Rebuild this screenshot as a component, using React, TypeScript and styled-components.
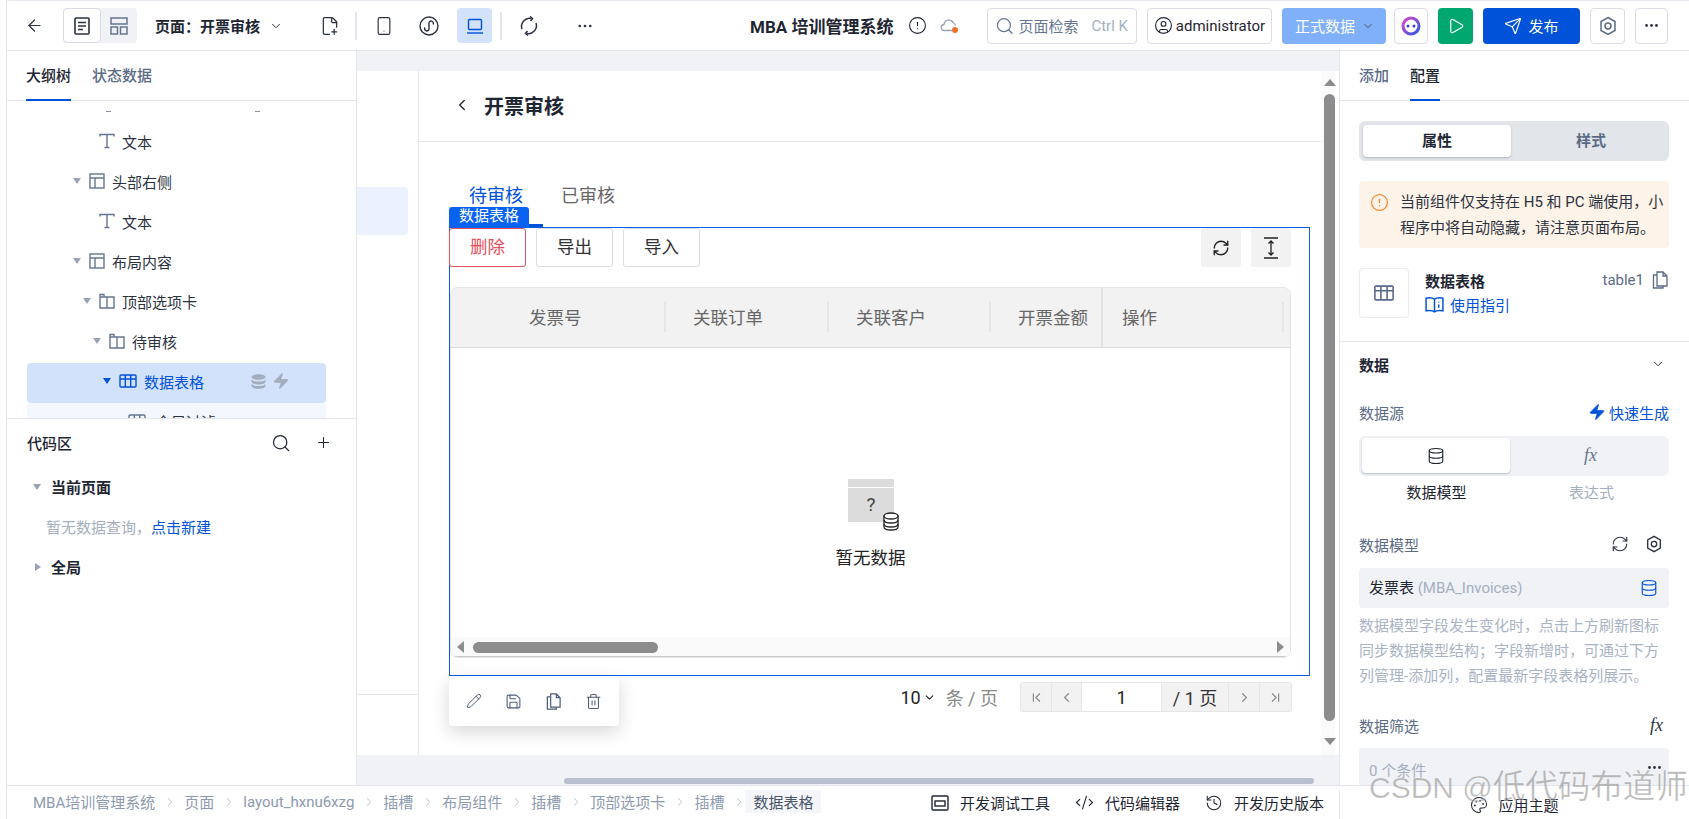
import styled, { createGlobalStyle } from "styled-components";
import {
  ArrowLeft,
  ChevronDown,
  ChevronFirst,
  ChevronLast,
  ChevronLeft,
  ChevronRight,
  CircleAlert,
  CircleUser,
  Code2,
  Database,
  FilePlus2,
  History,
  MoreHorizontal,
  Palette,
  Pencil,
  Play,
  Plus,
  RefreshCw,
  Save,
  Search,
  Send,
  Smartphone,
  Trash2,
  Zap,
} from "lucide-react";

const GlobalStyle = createGlobalStyle`
  html, body {
    margin: 0;
    padding: 0;
    height: 100%;
    overflow: hidden;
    background: #ffffff;
  }
  * { box-sizing: border-box; }
  #root {
    height: 819px;
    font-family: Roboto, "Noto Sans CJK SC", sans-serif;
    font-size: 15px;
    color: #1f2633;
  }
`;

const Shell = styled.div`
  position: relative;
  display: flex;
  flex-direction: column;
  width: 1689px;
  height: 819px;
  padding-left: 6px;
  overflow: hidden;
  background: #ffffff;
`;
const ShellInner = styled.div`
  display: flex;
  flex-direction: column;
  height: 100%;
  border-left: 1px solid #e2e5ee;
  border-top: 1px solid #e8eaf1;
`;

/* ---------- header ---------- */
const Header = styled.header`
  display: flex;
  align-items: center;
  flex: none;
  height: 50px;
  padding: 0 21px 0 18px;
  border-bottom: 1px solid #e2e5ee;
`;
const HeaderIcon = styled.button<{ $ml?: number; $active?: boolean }>`
  display: flex;
  align-items: center;
  justify-content: center;
  flex: none;
  width: 35px;
  height: 35px;
  margin-left: ${(p) => p.$ml ?? 0}px;
  padding: 0;
  border: none;
  border-radius: 4px;
  color: ${(p) => (p.$active ? "#0052d9" : "#2b3240")};
  background: ${(p) => (p.$active ? "#d2e2fb" : "transparent")};
`;
const BackIcon = styled.div`
  display: flex;
  color: #2b3240;
`;
const Segmented = styled.div`
  display: flex;
  flex: none;
  width: 74px;
  height: 35px;
  margin-left: 19px;
  border-radius: 4px;
  background: #f0f2f6;
`;
const SegmentItem = styled.div<{ $on?: boolean }>`
  display: flex;
  align-items: center;
  justify-content: center;
  flex: 1;
  border-radius: 4px;
  color: ${(p) => (p.$on ? "#2b3240" : "#66758f")};
  background: ${(p) => (p.$on ? "#ffffff" : "transparent")};
  border: ${(p) => (p.$on ? "1px solid #d6dae5" : "none")};
`;
const PageSelect = styled.div`
  display: flex;
  align-items: center;
  flex: none;
  margin-left: 18px;
  gap: 9px;
  font-weight: 700;
  white-space: nowrap;
`;
const HeaderSep = styled.div<{ $ml: number }>`
  flex: none;
  width: 2px;
  height: 28px;
  margin-left: ${(p) => p.$ml}px;
  background: #e2e5ee;
`;
const AppTitle = styled.div`
  flex: none;
  margin-left: 148px;
  font-size: 17px;
  font-weight: 700;
  white-space: nowrap;
`;
const TitleIcon = styled.div<{ $ml: number }>`
  display: flex;
  margin-left: ${(p) => p.$ml}px;
`;
const RightGroup = styled.div`
  display: flex;
  align-items: center;
  margin-left: auto;
`;
const SearchBox = styled.div`
  display: flex;
  align-items: center;
  width: 150px;
  height: 36px;
  padding: 0 8px 0 7px;
  gap: 4px;
  border: 1px solid #d9dde7;
  border-radius: 4px;
  color: #66758f;
  white-space: nowrap;
`;
const ShortcutHint = styled.span`
  margin-left: 9px;
  color: #a5afc0;
`;
const UserBox = styled.div`
  display: flex;
  align-items: center;
  justify-content: center;
  width: 125px;
  height: 36px;
  margin-left: 10px;
  gap: 3px;
  border: 1px solid #d9dde7;
  border-radius: 4px;
  white-space: nowrap;
`;
const EnvButton = styled.div`
  display: flex;
  align-items: center;
  width: 104px;
  height: 36px;
  margin-left: 10px;
  padding-left: 13px;
  gap: 6px;
  border-radius: 4px;
  color: #ffffff;
  background: #80b0fa;
  white-space: nowrap;
  svg { color: #5f7ea8; }
`;
const SquareButton = styled.div<{ $w?: number; $ml?: number; $bg?: string; $muted?: boolean }>`
  display: flex;
  align-items: center;
  justify-content: center;
  width: ${(p) => p.$w ?? 35}px;
  height: 36px;
  margin-left: ${(p) => p.$ml ?? 10}px;
  border-radius: 4px;
  border: ${(p) => (p.$bg ? "none" : "1px solid #d9dde7")};
  background: ${(p) => p.$bg ?? "#ffffff"};
  color: ${(p) => (p.$bg ? "#ffffff" : p.$muted ? "#5b6b86" : "#2b3240")};
`;
const PublishButton = styled(SquareButton)`
  width: 97px;
  gap: 6px;
`;

/* ---------- main columns ---------- */
const Main = styled.div`
  display: flex;
  flex: none;
  height: 734px;
`;
const LeftPanel = styled.aside`
  display: flex;
  flex-direction: column;
  flex: none;
  width: 350px;
  border-right: 1px solid #e2e5ee;
`;
const PanelTabs = styled.div`
  display: flex;
  flex: none;
  height: 50px;
  padding-left: 19px;
  gap: 21px;
  border-bottom: 1px solid #e2e5ee;
`;
const PanelTab = styled.div<{ $on?: boolean }>`
  display: flex;
  align-items: center;
  height: 50px;
  padding-bottom: 2px;
  font-weight: 500;
  color: ${(p) => (p.$on ? "#1f2633" : "#5b6b86")};
  border-bottom: 2px solid ${(p) => (p.$on ? "#0052d9" : "transparent")};
`;
const Tree = styled.div`
  flex: none;
  height: 317px;
  overflow: hidden;
  padding: 10px 30px 0 20px;
`;
const TreePeek = styled.div`
  display: flex;
  height: 12px;
  padding-left: 79px;
  gap: 144px;
  i {
    width: 5px;
    height: 1px;
    background: #8a93a5;
  }
`;
const TreeRow = styled.div<{ $pad: number; $selected?: boolean; $child?: boolean }>`
  display: flex;
  align-items: center;
  height: 40px;
  padding-left: ${(p) => p.$pad}px;
  padding-bottom: 4px;
  border-radius: 4px;
  white-space: nowrap;
  color: ${(p) => (p.$selected ? "#0052d9" : "#2b3240")};
  background: ${(p) => (p.$selected ? "#d2e2fb" : p.$child ? "#f4f7fe" : "transparent")};
`;
const Caret = styled.span<{ $dir?: "down" | "right"; $color?: string }>`
  flex: none;
  width: 0;
  height: 0;
  ${(p) =>
    p.$dir === "right"
      ? `border-left: 6px solid ${p.$color ?? "#98a2b6"}; border-top: 4px solid transparent; border-bottom: 4px solid transparent; margin-left: 2px;`
      : `border-top: 6px solid ${p.$color ?? "#98a2b6"}; border-left: 4px solid transparent; border-right: 4px solid transparent;`}
`;
const TreeIcon = styled.span<{ $ml?: number; $gap?: number }>`
  display: flex;
  flex: none;
  margin: 0 ${(p) => p.$gap ?? 7}px 0 ${(p) => p.$ml ?? 8}px;
  color: ${(p) => p.color ?? "#66758f"};
`;
const RowActions = styled.span`
  display: flex;
  align-items: center;
  margin-left: 47px;
  gap: 6px;
  color: #a2adbd;
`;
const CodeArea = styled.div`
  flex: 1;
  border-top: 1px solid #e2e5ee;
  padding: 0 24px 0 20px;
`;
const CodeHead = styled.div`
  display: flex;
  align-items: center;
  height: 48px;
  padding-bottom: 3px;
  margin-top: 1px;
  font-weight: 500;
`;
const CodeTools = styled.div`
  display: flex;
  align-items: center;
  margin-left: auto;
  gap: 24px;
  svg { display: block; }
`;
const CodeGroup = styled.div`
  display: flex;
  align-items: center;
  height: 40px;
  padding-left: 6px;
  padding-bottom: 3px;
  gap: 10px;
  font-weight: 700;
  &:first-of-type { margin-top: 1px; }
`;
const CodeEmpty = styled.div`
  display: flex;
  align-items: center;
  height: 40px;
  padding-left: 19px;
  padding-bottom: 3px;
  color: #a5afc0;
  a { color: #0052d9; }
`;

/* ---------- canvas ---------- */
const Canvas = styled.main`
  display: flex;
  flex-direction: column;
  flex: 1;
  min-width: 0;
  padding-top: 20px;
  background: #f0f2f6;
`;
const Page = styled.div`
  display: flex;
  flex: none;
  height: 684px;
  padding-right: 4px;
  background: #ffffff;
`;
const PageSide = styled.div`
  flex: none;
  display: flex;
  flex-direction: column;
  width: 62px;
  padding-top: 116px;
  border-right: 1px solid #e5e7eb;
`;
const SideActive = styled.div`
  width: 51px;
  height: 48px;
  border-radius: 0 4px 4px 0;
  background: #ebf1fd;
`;
const SideLine = styled.div`
  margin-top: 459px;
  height: 1px;
  background: #e5e7eb;
`;
const PageMain = styled.div`
  flex: 1;
  min-width: 0;
`;
const PageHeader = styled.div`
  display: flex;
  align-items: center;
  height: 71px;
  padding: 0 0 2px 34px;
  gap: 13px;
  border-bottom: 1px solid #e5e7eb;
  font-size: 20px;
  font-weight: 700;
`;
const PageBody = styled.div`
  padding: 38px 11px 0 30px;
`;
const ContentTabs = styled.div`
  display: flex;
  height: 47px;
`;
const ContentTab = styled.div<{ $on?: boolean }>`
  height: 47px;
  padding: 0 20px;
  font-size: 18px;
  line-height: 32px;
  color: ${(p) => (p.$on ? "#0052d9" : "#666666")};
  border-bottom: 3px solid ${(p) => (p.$on ? "#0052d9" : "transparent")};
  & + & { margin-left: -2px; }
`;
const SelectFrame = styled.div`
  position: relative;
  height: 449px;
  padding: 0 18px 0 0;
  border: 1px solid #0b5fe0;
`;
const FrameTag = styled.div`
  position: absolute;
  top: -21px;
  left: -1px;
  width: 80px;
  height: 21px;
  border-radius: 3px 3px 0 0;
  color: #ffffff;
  background: #0a62f0;
  font-size: 15px;
  line-height: 19px;
  text-align: center;
`;
const TableToolbar = styled.div`
  display: flex;
  gap: 10px;
  height: 39px;
  margin-left: -1px;
`;
const ToolButton = styled.div<{ $danger?: boolean }>`
  display: flex;
  align-items: center;
  justify-content: center;
  width: 77px;
  height: 39px;
  padding-bottom: 4px;
  border-radius: 3px;
  border: 1px solid ${(p) => (p.$danger ? "#e4505c" : "#dddddd")};
  color: ${(p) => (p.$danger ? "#e4505c" : "#333333")};
  font-size: 17.500px;
`;
const ToolSquare = styled.div<{ $first?: boolean }>`
  display: flex;
  align-items: center;
  justify-content: center;
  width: 40px;
  height: 39px;
  margin-left: ${(p) => (p.$first ? "auto" : "0")};
  border-radius: 3px;
  background: #f2f2f2;
  color: #222222;
`;
const Table = styled.div`
  display: flex;
  flex-direction: column;
  height: 371px;
  margin-top: 20px;
  border: 1px solid #e3e3e3;
  border-radius: 8px;
  overflow: hidden;
`;
const TableHead = styled.div`
  display: flex;
  flex: none;
  height: 60px;
  background: #f2f2f2;
  border-bottom: 1px solid #dcdcdc;
  color: #666666;
  font-size: 17.500px;
`;
const HeadCell = styled.div<{ $w: number; $pad: number; $fixed?: boolean }>`
  display: flex;
  align-items: center;
  flex: none;
  width: ${(p) => p.$w}px;
  padding-left: ${(p) => p.$pad}px;
  padding-bottom: 2px;
  border-left: ${(p) => (p.$fixed ? "2px solid #e3e3e3" : "none")};
  white-space: nowrap;
`;
const HeadSep = styled.span`
  width: 2px;
  height: 30px;
  margin-left: auto;
  background: #e6e6e6;
`;
const TableEmpty = styled.div`
  display: flex;
  flex-direction: column;
  align-items: center;
  flex: 1;
  padding-top: 131px;
  font-size: 17.500px;
  line-height: 26px;
  color: #222222;
  svg { display: block; margin: 0 0 14px 6px; }
`;
const HScroll = styled.div`
  display: flex;
  align-items: center;
  flex: none;
  height: 20px;
  padding: 1px 6px 0;
  background: #fafafa;
  border-bottom: 1px solid #c9c9c9;
`;
const HThumb = styled.div`
  width: 185px;
  height: 11px;
  margin-left: 9px;
  border-radius: 6px;
  background: #8c8c8c;
`;
const ScrollArrow = styled.span<{ $dir: "left" | "right" | "up" | "down"; $auto?: boolean }>`
  flex: none;
  width: 0;
  height: 0;
  margin-left: ${(p) => (p.$auto ? "auto" : "0")};
  ${(p) =>
    p.$dir === "left"
      ? "border-right: 7px solid #8c8c8c; border-top: 6px solid transparent; border-bottom: 6px solid transparent;"
      : p.$dir === "right"
        ? "border-left: 7px solid #8c8c8c; border-top: 6px solid transparent; border-bottom: 6px solid transparent;"
        : p.$dir === "up"
          ? "border-bottom: 7px solid #8c8c8c; border-left: 6px solid transparent; border-right: 6px solid transparent;"
          : "border-top: 7px solid #8c8c8c; border-left: 6px solid transparent; border-right: 6px solid transparent; margin-left: 0; margin-top: 17px;"}
`;
const PagerZone = styled.div`
  position: relative;
  display: flex;
  align-items: center;
  justify-content: flex-end;
  height: 42px;
  padding: 6px 18px 6px 0;
`;
const PageSize = styled.div`
  display: flex;
  align-items: center;
  gap: 2px;
  font-size: 18px;
  color: #222222;
`;
const PerPage = styled.span`
  margin: 0 22px 0 10px;
  font-size: 18px;
  color: #888888;
`;
const Pager = styled.div`
  display: flex;
  height: 30px;
  border: 1px solid #e6e6e6;
  border-radius: 3px;
  background: #f2f2f2;
  overflow: hidden;
`;
const PagerCell = styled.div<{ $w: number; $input?: boolean }>`
  display: flex;
  align-items: center;
  justify-content: center;
  width: ${(p) => p.$w}px;
  font-size: 18px;
  color: ${(p) => (p.$input ? "#222222" : "#333333")};
  background: ${(p) => (p.$input ? "#ffffff" : "transparent")};
  border-right: 1px solid #e6e6e6;
  &:last-child { border-right: none; }
  svg { color: #8f8f8f; }
`;
const FloatBar = styled.div`
  position: absolute;
  top: 0;
  left: 0;
  display: flex;
  align-items: center;
  justify-content: center;
  width: 170px;
  height: 50px;
  gap: 23px;
  border-radius: 0 0 4px 4px;
  color: #4d5d7a;
  background: #ffffff;
  box-shadow: 0 6px 18px rgba(0, 0, 0, 0.16);
`;
const VScroll = styled.div`
  display: flex;
  flex-direction: column;
  align-items: center;
  flex: none;
  width: 14px;
  padding: 8px 0 8px 3px;
  background: #fafafa;
`;
const VThumb = styled.div`
  flex: none;
  width: 11px;
  height: 627px;
  margin-top: 8px;
  border-radius: 6px;
  background: #8c8c8c;
`;
const CanvasFoot = styled.div`
  display: flex;
  align-items: center;
  flex: 1;
  padding: 22px 25px 0 207px;
`;
const CanvasThumb = styled.div`
  width: 100%;
  height: 6px;
  border-radius: 3px;
  background: #b8c0cf;
`;

/* ---------- right panel ---------- */
const RightPanel = styled.aside`
  flex: none;
  width: 350px;
  border-left: 1px solid #e2e5ee;
  overflow: hidden;
`;
const RightBody = styled.div`
  padding: 0 20px 0 19px;
`;
const Switcher = styled.div<{ $tone: "dark" | "light" }>`
  display: flex;
  height: 40px;
  margin-top: ${(p) => (p.$tone === "dark" ? 20 : 12)}px;
  padding: ${(p) => (p.$tone === "dark" ? "4px 0 4px 4px" : "2px 0 3px 3px")};
  border-radius: 6px;
  background: ${(p) => (p.$tone === "dark" ? "#e2e5ea" : "#f0f2f6")};
`;
const SwitchItem = styled.div<{ $on?: boolean; $text?: boolean }>`
  display: flex;
  align-items: center;
  justify-content: center;
  flex: ${(p) => (p.$on ? "0 0 148px" : "1")};
  margin-right: ${(p) => (p.$on ? "2px" : "0")};
  padding-bottom: ${(p) => (p.$text ? "3px" : "0")};
  border-radius: 4px;
  font-weight: 700;
  color: ${(p) => (p.$on ? "#1f2633" : "#5b6b86")};
  background: ${(p) => (p.$on ? "#ffffff" : "transparent")};
  box-shadow: ${(p) => (p.$on ? "0 1px 2px rgba(60, 70, 90, 0.3)" : "none")};
`;
const Notice = styled.div`
  display: flex;
  gap: 11px;
  height: 67px;
  margin-top: 20px;
  padding: 8px 0 0 11px;
  border-radius: 4px;
  background: #fef3e9;
  line-height: 26px;
  color: #2b3240;
  white-space: nowrap;
  svg { flex: none; margin-top: 4px; color: #f58a32; }
`;
const CompCard = styled.div`
  display: flex;
  margin-top: 20px;
  height: 50px;
`;
const CompIcon = styled.div`
  display: flex;
  align-items: center;
  justify-content: center;
  flex: none;
  width: 50px;
  height: 50px;
  border: 1px solid #e8eaf0;
  border-radius: 4px;
  color: #5b6b86;
`;
const CompInfo = styled.div`
  flex: 1;
  padding-left: 16px;
`;
const CompLine = styled.div`
  display: flex;
  align-items: center;
  height: 24px;
  font-weight: 700;
`;
const CompName = styled.span`
  display: flex;
  align-items: center;
  margin-left: auto;
  gap: 7px;
  font-weight: 400;
  color: #5b6b86;
  svg { color: #5b6b86; }
`;
const GuideLink = styled.div`
  display: flex;
  align-items: center;
  height: 24px;
  gap: 6px;
  color: #0052d9;
`;
const Divider = styled.div`
  height: 1px;
  margin-top: 23px;
  background: #e2e5ee;
`;
const SectionHead = styled.div`
  display: flex;
  align-items: center;
  justify-content: space-between;
  height: 46px;
  padding: 0 4px 2px 0;
  font-weight: 700;
`;
const FieldRow = styled.div<{ $mt: number }>`
  display: flex;
  align-items: center;
  justify-content: space-between;
  height: 24px;
  margin-top: ${(p) => p.$mt}px;
  color: #5b6b86;
`;
const QuickLink = styled.span`
  display: flex;
  align-items: center;
  gap: 3px;
  color: #0052d9;
`;
const FieldIcons = styled.span`
  display: flex;
  align-items: center;
  gap: 16px;
  padding-right: 6px;
  color: #2b3240;
`;
const SwitchLabels = styled.div`
  display: flex;
  height: 24px;
  margin-top: 5px;
  line-height: 24px;
`;
const SwitchLabel = styled.div<{ $muted?: boolean }>`
  flex: 1;
  text-align: center;
  color: ${(p) => (p.$muted ? "#a5afc0" : "#1f2633")};
`;
const ModelInput = styled.div`
  display: flex;
  align-items: center;
  justify-content: space-between;
  height: 40px;
  margin-top: 12px;
  padding: 0 11px 0 10px;
  border-radius: 4px;
  background: #f0f2f6;
  color: #1f2633;
  div { margin-bottom: 4px; }
  span { color: #a5afc0; }
  svg { color: #0052d9; }
`;
const HelpText = styled.div`
  margin-top: 6px;
  line-height: 25px;
  color: #a9b3c4;
`;
const FilterBox = styled.div`
  display: flex;
  justify-content: space-between;
  height: 60px;
  margin-top: 11px;
  padding: 11px 6px 0 10px;
  border-radius: 4px;
  background: #f0f2f6;
  color: #a5afc0;
  svg { color: #2b3240; }
`;
const FxMark = styled.span<{ $muted?: boolean }>`
  font-family: "Liberation Serif", serif;
  font-style: italic;
  font-weight: 400;
  font-size: 18px;
  color: ${(p) => (p.$muted ? "#66758f" : "#2b3240")};
`;

/* ---------- footer ---------- */
const Footer = styled.footer`
  display: flex;
  align-items: center;
  flex: none;
  height: 34px;
  border-top: 1px solid #e2e5ee;
`;
const Crumbs = styled.nav`
  display: flex;
  align-items: center;
  padding: 0 0 2px 26px;
  color: #8d9ab0;
  white-space: nowrap;
`;
const CrumbSep = styled.span`
  display: flex;
  justify-content: center;
  width: 29px;
  color: #a5afc0;
`;
const CrumbLast = styled.span`
  margin-left: -8px;
  padding: 1px 8px;
  color: #4a5568;
  background: #f4f6fa;
`;
const FootTools = styled.div`
  display: flex;
  align-items: center;
  margin-left: auto;
  padding-right: 15px;
  gap: 25px;
`;
const FootTool = styled.div`
  display: flex;
  align-items: center;
  gap: 11px;
  white-space: nowrap;
`;
const ThemeCell = styled.div`
  display: flex;
  align-items: center;
  justify-content: center;
  flex: none;
  width: 350px;
  height: 29px;
  margin-top: 4px;
  gap: 10px;
  border-left: 1px solid #e2e5ee;
`;
const Watermark = styled.div`
  position: absolute;
  top: 765px;
  left: 1369px;
  font-family: "Liberation Sans", "Noto Sans CJK SC", sans-serif;
  font-size: 30px;
  line-height: 44px;
  white-space: nowrap;
  color: rgba(140, 140, 140, 0.6);
  -webkit-text-stroke: 0.6px rgba(255, 255, 255, 0.5);
  pointer-events: none;
  span { font-size: 32.500px; }
`;

/* ---------- drawn icons ---------- */
const DocListIcon = () => (
  <svg width="18" height="20" viewBox="0 0 18 20" fill="none" stroke="currentColor" strokeWidth="1.6">
    <rect x="2" y="2" width="14" height="16" rx="1" />
    <path d="M5 6.500h8M5 10h8M5 13.500h5" />
  </svg>
);
const LayoutIcon = () => (
  <svg width="20" height="20" viewBox="0 0 20 20" fill="none" stroke="currentColor" strokeWidth="1.5">
    <rect x="2" y="2" width="16" height="6" />
    <rect x="2" y="11" width="6.500" height="7" />
    <rect x="11.500" y="11" width="6.500" height="7" />
  </svg>
);
const MiniAppIcon = () => (
  <svg width="20" height="20" viewBox="0 0 20 20" fill="none" stroke="currentColor" strokeWidth="1.4">
    <circle cx="10" cy="10" r="9" />
    <path d="M6 11.500a2.200 2.200 0 1 0 4 1V7.500a2.200 2.200 0 1 1 4 1" />
  </svg>
);
const LaptopIcon = () => (
  <svg width="18" height="18" viewBox="0 0 18 18" fill="none" stroke="currentColor" strokeWidth="1.4">
    <rect x="2.500" y="2.500" width="13" height="10" rx="1" />
    <path d="M1 16h16" />
  </svg>
);
const SyncIcon = () => (
  <svg width="20" height="20" viewBox="0 0 20 20" fill="none" stroke="currentColor" strokeWidth="1.5">
    <path d="M3 13a8 8 0 0 1 9-10.500M17 7a8 8 0 0 1-9 10.500" />
    <path d="M11 0.500l2.500 2-2 2.500M9 19.500l-2.500-2 2-2.500" />
  </svg>
);
const AiIcon = () => (
  <svg width="20" height="20" viewBox="0 0 20 20">
    <defs>
      <linearGradient id="ai-ring" x1="0" y1="0" x2="1" y2="1">
        <stop offset="0" stopColor="#e040c8" />
        <stop offset="1" stopColor="#2a5be8" />
      </linearGradient>
    </defs>
    <circle cx="10" cy="10" r="8" fill="none" stroke="url(#ai-ring)" strokeWidth="3" />
    <circle cx="7" cy="10" r="1.500" fill="#3a3fd8" />
    <circle cx="13" cy="10" r="1.500" fill="#3a3fd8" />
  </svg>
);
const HexGearIcon = ({ size = 20 }: { size?: number }) => (
  <svg width={size} height={size} viewBox="0 0 20 20" fill="none" stroke="currentColor" strokeWidth="1.5">
    <path d="M10 1.500l7 4v9l-7 4-7-4v-9z" />
    <circle cx="10" cy="10" r="3" />
  </svg>
);
const TextIcon = () => (
  <svg width="16" height="16" viewBox="0 0 16 16" fill="none" stroke="currentColor" strokeWidth="1.4">
    <path d="M1 3.500V1.500h14v2M8 1.500v13M5.500 14.500h5" />
  </svg>
);
const PanelIcon = () => (
  <svg width="16" height="16" viewBox="0 0 16 16" fill="none" stroke="currentColor" strokeWidth="1.4">
    <rect x="1" y="1" width="14" height="14" />
    <path d="M1 5h14M6 5v10" />
  </svg>
);
const TabsIcon = () => (
  <svg width="16" height="16" viewBox="0 0 16 16" fill="none" stroke="currentColor" strokeWidth="1.4">
    <path d="M1 4h14v11H1zM1 4V1.500h4V4M8 4v11" />
  </svg>
);
const GridIcon = ({ w = 18, h = 14 }: { w?: number; h?: number }) => (
  <svg width={w} height={h} viewBox="0 0 18 14" fill="none" stroke="currentColor" strokeWidth="1.4">
    <rect x="1" y="1" width="16" height="12" rx="1" />
    <path d="M1 5h16M6.300 1v12M11.700 1v12" />
  </svg>
);
const StackIcon = () => (
  <svg width="15" height="15" viewBox="0 0 15 15" fill="currentColor">
    <ellipse cx="7.500" cy="3" rx="7" ry="2.800" />
    <path d="M0.500 5.400c1.200 1.500 3.800 2.200 7 2.200s5.800-.7 7-2.200v2.300c0 1.500-3 2.700-7 2.700s-7-1.200-7-2.700z" />
    <path d="M0.500 9.900c1.200 1.500 3.800 2.200 7 2.200s5.800-.7 7-2.200v2.200c0 1.500-3 2.700-7 2.700s-7-1.200-7-2.700z" />
  </svg>
);
const CopyDocIcon = ({ size = 18 }: { size?: number }) => (
  <svg width={size} height={size} viewBox="0 0 18 18" fill="none" stroke="currentColor" strokeWidth="1.3">
    <path d="M6 1h6l4 4v10H6zM12 1v4h4" />
    <path d="M6 4H2.500v13H12v-2" />
  </svg>
);
const EmptyIcon = () => (
  <svg width="52" height="52" viewBox="0 0 52 52">
    <rect x="0" y="0" width="46" height="8" fill="#dcdcdc" />
    <rect x="0" y="9" width="46" height="34" fill="#dcdcdc" />
    <text x="23" y="32" fontSize="19" textAnchor="middle" fill="#444444" fontFamily="Roboto, sans-serif">?</text>
    <g fill="#ffffff" stroke="#222222" strokeWidth="1.3">
      <path d="M36 37v11c0 2 3 3 7 3s7-1 7-3V37z" />
      <ellipse cx="43" cy="37" rx="7" ry="3" />
      <path d="M36 41c0 2 3 3 7 3s7-1 7-3M36 45c0 2 3 3 7 3s7-1 7-3" fill="none" />
    </g>
  </svg>
);
const DisplayIcon = () => (
  <svg width="18" height="18" viewBox="0 0 18 18" fill="none" stroke="currentColor" strokeWidth="1.4">
    <rect x="1" y="2" width="16" height="14" rx="1" />
    <rect x="4" y="7" width="10" height="5" />
  </svg>
);
const ExpandIcon = () => (
  <svg width="20" height="22" viewBox="0 0 20 22" fill="none" stroke="currentColor" strokeWidth="1.3">
    <path d="M3 1h14M3 21h14M10 4v14M7.500 6.500L10 4l2.500 2.500M7.500 15.500L10 18l2.500-2.500" />
  </svg>
);
const BookIcon = () => (
  <svg width="19" height="19" viewBox="0 0 18 18" fill="none" stroke="currentColor" strokeWidth="1.4">
    <path d="M9 4C7.500 2.800 4 2.500 1 3v12c3-.5 6.500-.2 8 1 1.500-1.200 5-1.500 8-1V3c-3-.5-6.500-.2-8 1zM9 4v12" />
    <path d="M13 6.500v.5M13 9v3" />
  </svg>
);

const crumbs = ["MBA培训管理系统", "页面", "layout_hxnu6xzg", "插槽", "布局组件", "插槽", "顶部选项卡", "插槽"];

export default function App() {
  return (
    <>
      <GlobalStyle />
      <Shell>
        <ShellInner>
          <Header>
            <BackIcon>
              <ArrowLeft size={19} strokeWidth={1.5} />
            </BackIcon>
            <Segmented>
              <SegmentItem $on>
                <DocListIcon />
              </SegmentItem>
              <SegmentItem>
                <LayoutIcon />
              </SegmentItem>
            </Segmented>
            <PageSelect>
              页面：开票审核
              <ChevronDown size={14} strokeWidth={1.6} />
            </PageSelect>
            <HeaderIcon $ml={29}>
              <FilePlus2 size={20} strokeWidth={1.5} />
            </HeaderIcon>
            <HeaderSep $ml={8} />
            <HeaderIcon $ml={9}>
              <Smartphone size={20} strokeWidth={1.4} />
            </HeaderIcon>
            <HeaderIcon $ml={10}>
              <MiniAppIcon />
            </HeaderIcon>
            <HeaderIcon $ml={11} $active>
              <LaptopIcon />
            </HeaderIcon>
            <HeaderSep $ml={8} />
            <HeaderIcon $ml={9}>
              <SyncIcon />
            </HeaderIcon>
            <HeaderIcon $ml={21}>
              <MoreHorizontal size={18} strokeWidth={1.6} />
            </HeaderIcon>
            <AppTitle>MBA 培训管理系统</AppTitle>
            <TitleIcon $ml={15}>
              <CircleAlert size={19} strokeWidth={1.4} />
            </TitleIcon>
            <TitleIcon $ml={13}>
              <svg width="20" height="20" viewBox="0 0 20 20" fill="none" stroke="#98a2b6" strokeWidth="1.3">
                <path d="M12 14.500H4.500a3 3 0 0 1-.5-6 5 5 0 0 1 9.500-1.500 3.500 3.500 0 0 1 2 2.500" />
                <circle cx="15" cy="14" r="3" fill="#f2702c" stroke="none" />
              </svg>
            </TitleIcon>
            <RightGroup>
              <SearchBox>
                <Search size={20} strokeWidth={1.5} />
                页面检索
                <ShortcutHint>Ctrl K</ShortcutHint>
              </SearchBox>
              <UserBox>
                <CircleUser size={19} strokeWidth={1.4} />
                administrator
              </UserBox>
              <EnvButton>
                正式数据
                <ChevronDown size={14} />
              </EnvButton>
              <SquareButton $w={34} $ml={8}>
                <AiIcon />
              </SquareButton>
              <SquareButton $bg="#00a870">
                <Play size={18} strokeWidth={1.6} />
              </SquareButton>
              <PublishButton $bg="#0052d9">
                <Send size={18} strokeWidth={1.5} />
                发布
              </PublishButton>
              <SquareButton $muted>
                <HexGearIcon size={20} />
              </SquareButton>
              <SquareButton $w={33}>
                <MoreHorizontal size={17} />
              </SquareButton>
            </RightGroup>
          </Header>

          <Main>
            <LeftPanel>
              <PanelTabs>
                <PanelTab $on>大纲树</PanelTab>
                <PanelTab>状态数据</PanelTab>
              </PanelTabs>
              <Tree>
                <TreePeek>
                  <i />
                  <i />
                </TreePeek>
                <TreeRow $pad={72}>
                  <TreeIcon $ml={0}>
                    <TextIcon />
                  </TreeIcon>
                  文本
                </TreeRow>
                <TreeRow $pad={46}>
                  <Caret />
                  <TreeIcon>
                    <PanelIcon />
                  </TreeIcon>
                  头部右侧
                </TreeRow>
                <TreeRow $pad={72}>
                  <TreeIcon $ml={0}>
                    <TextIcon />
                  </TreeIcon>
                  文本
                </TreeRow>
                <TreeRow $pad={46}>
                  <Caret />
                  <TreeIcon>
                    <PanelIcon />
                  </TreeIcon>
                  布局内容
                </TreeRow>
                <TreeRow $pad={56}>
                  <Caret />
                  <TreeIcon>
                    <TabsIcon />
                  </TreeIcon>
                  顶部选项卡
                </TreeRow>
                <TreeRow $pad={66}>
                  <Caret />
                  <TreeIcon>
                    <TabsIcon />
                  </TreeIcon>
                  待审核
                </TreeRow>
                <TreeRow $pad={76} $selected>
                  <Caret $color="#0052d9" />
                  <TreeIcon color="#0052d9">
                    <GridIcon />
                  </TreeIcon>
                  数据表格
                  <RowActions>
                    <StackIcon />
                    <Zap size={18} fill="currentColor" strokeWidth={1} />
                  </RowActions>
                </TreeRow>
                <TreeRow $pad={93} $child>
                  <TreeIcon $gap={10}>
                    <GridIcon />
                  </TreeIcon>
                  全局过滤
                </TreeRow>
              </Tree>
              <CodeArea>
                <CodeHead>
                  代码区
                  <CodeTools>
                    <Search size={20} strokeWidth={1.5} />
                    <Plus size={17} strokeWidth={1.5} />
                  </CodeTools>
                </CodeHead>
                <CodeGroup>
                  <Caret />
                  当前页面
                </CodeGroup>
                <CodeEmpty>
                  暂无数据查询，<a>点击新建</a>
                </CodeEmpty>
                <CodeGroup>
                  <Caret $dir="right" />
                  全局
                </CodeGroup>
              </CodeArea>
            </LeftPanel>

            <Canvas>
              <Page>
                <PageSide>
                  <SideActive />
                  <SideLine />
                </PageSide>
                <PageMain>
                  <PageHeader>
                    <ChevronLeft size={18} strokeWidth={1.8} />
                    开票审核
                  </PageHeader>
                  <PageBody>
                    <ContentTabs>
                      <ContentTab $on>待审核</ContentTab>
                      <ContentTab>已审核</ContentTab>
                    </ContentTabs>
                    <SelectFrame>
                      <FrameTag>数据表格</FrameTag>
                      <TableToolbar>
                        <ToolButton $danger>删除</ToolButton>
                        <ToolButton>导出</ToolButton>
                        <ToolButton>导入</ToolButton>
                        <ToolSquare $first>
                          <RefreshCw size={18} strokeWidth={1.8} />
                        </ToolSquare>
                        <ToolSquare>
                          <ExpandIcon />
                        </ToolSquare>
                      </TableToolbar>
                      <Table>
                        <TableHead>
                          <HeadCell $w={215} $pad={78}>
                            发票号
                            <HeadSep />
                          </HeadCell>
                          <HeadCell $w={163} $pad={27}>
                            关联订单
                            <HeadSep />
                          </HeadCell>
                          <HeadCell $w={162} $pad={27}>
                            关联客户
                            <HeadSep />
                          </HeadCell>
                          <HeadCell $w={110} $pad={27}>
                            开票金额
                          </HeadCell>
                          <HeadCell $w={183} $pad={19} $fixed>
                            操作
                            <HeadSep />
                          </HeadCell>
                        </TableHead>
                        <TableEmpty>
                          <EmptyIcon />
                          暂无数据
                        </TableEmpty>
                        <HScroll>
                          <ScrollArrow $dir="left" />
                          <HThumb />
                          <ScrollArrow $dir="right" $auto />
                        </HScroll>
                      </Table>
                    </SelectFrame>
                    <PagerZone>
                      <FloatBar>
                        <Pencil size={16} strokeWidth={1.5} />
                        <Save size={17} strokeWidth={1.5} />
                        <CopyDocIcon size={17} />
                        <Trash2 size={17} strokeWidth={1.5} />
                      </FloatBar>
                      <PageSize>
                        10
                        <ChevronDown size={13} strokeWidth={2} />
                      </PageSize>
                      <PerPage>条 / 页</PerPage>
                      <Pager>
                        <PagerCell $w={31}>
                          <ChevronFirst size={15} />
                        </PagerCell>
                        <PagerCell $w={30}>
                          <ChevronLeft size={15} />
                        </PagerCell>
                        <PagerCell $w={80} $input>
                          1
                        </PagerCell>
                        <PagerCell $w={67}>/ 1 页</PagerCell>
                        <PagerCell $w={31}>
                          <ChevronRight size={15} />
                        </PagerCell>
                        <PagerCell $w={31}>
                          <ChevronLast size={15} />
                        </PagerCell>
                      </Pager>
                    </PagerZone>
                  </PageBody>
                </PageMain>
                <VScroll>
                  <ScrollArrow $dir="up" />
                  <VThumb />
                  <ScrollArrow $dir="down" />
                </VScroll>
              </Page>
              <CanvasFoot>
                <CanvasThumb />
              </CanvasFoot>
            </Canvas>

            <RightPanel>
              <PanelTabs>
                <PanelTab>添加</PanelTab>
                <PanelTab $on>配置</PanelTab>
              </PanelTabs>
              <RightBody>
                <Switcher $tone="dark">
                  <SwitchItem $on $text>
                    属性
                  </SwitchItem>
                  <SwitchItem $text>样式</SwitchItem>
                </Switcher>
                <Notice>
                  <CircleAlert size={19} strokeWidth={1.6} />
                  <div>
                    当前组件仅支持在 H5 和 PC 端使用，小
                    <br />
                    程序中将自动隐藏，请注意页面布局。
                  </div>
                </Notice>
                <CompCard>
                  <CompIcon>
                    <GridIcon w={22} h={16} />
                  </CompIcon>
                  <CompInfo>
                    <CompLine>
                      数据表格
                      <CompName>
                        table1
                        <CopyDocIcon size={18} />
                      </CompName>
                    </CompLine>
                    <GuideLink>
                      <BookIcon />
                      使用指引
                    </GuideLink>
                  </CompInfo>
                </CompCard>
              </RightBody>
              <Divider />
              <RightBody>
                <SectionHead>
                  数据
                  <ChevronDown size={14} strokeWidth={1.6} />
                </SectionHead>
                <FieldRow $mt={12}>
                  数据源
                  <QuickLink>
                    <Zap size={18} fill="currentColor" strokeWidth={1} />
                    快速生成
                  </QuickLink>
                </FieldRow>
                <Switcher $tone="light">
                  <SwitchItem $on>
                    <Database size={18} strokeWidth={1.5} />
                  </SwitchItem>
                  <SwitchItem>
                    <FxMark $muted>fx</FxMark>
                  </SwitchItem>
                </Switcher>
                <SwitchLabels>
                  <SwitchLabel>数据模型</SwitchLabel>
                  <SwitchLabel $muted>表达式</SwitchLabel>
                </SwitchLabels>
                <FieldRow $mt={27}>
                  数据模型
                  <FieldIcons>
                    <RefreshCw size={18} strokeWidth={1.5} />
                    <HexGearIcon size={18} />
                  </FieldIcons>
                </FieldRow>
                <ModelInput>
                  <div>
                    发票表 <span>(MBA_Invoices)</span>
                  </div>
                  <Database size={18} strokeWidth={1.5} />
                </ModelInput>
                <HelpText>
                  数据模型字段发生变化时，点击上方刷新图标同步数据模型结构；字段新增时，可通过下方列管理-添加列，配置最新字段表格列展示。
                </HelpText>
                <FieldRow $mt={24}>
                  数据筛选
                  <FieldIcons>
                    <FxMark>fx</FxMark>
                  </FieldIcons>
                </FieldRow>
                <FilterBox>
                  0 个条件
                  <MoreHorizontal size={17} />
                </FilterBox>
              </RightBody>
            </RightPanel>
          </Main>

          <Footer>
            <Crumbs>
              {crumbs.map((c, i) => (
                <span key={i} style={{ display: "contents" }}>
                  {c}
                  <CrumbSep>
                    <ChevronRight size={14} strokeWidth={1.3} />
                  </CrumbSep>
                </span>
              ))}
              <CrumbLast>数据表格</CrumbLast>
            </Crumbs>
            <FootTools>
              <FootTool>
                <DisplayIcon />
                开发调试工具
              </FootTool>
              <FootTool>
                <Code2 size={19} strokeWidth={1.4} />
                代码编辑器
              </FootTool>
              <FootTool>
                <History size={18} strokeWidth={1.4} />
                开发历史版本
              </FootTool>
            </FootTools>
            <ThemeCell>
              <Palette size={18} strokeWidth={1.4} />
              应用主题
            </ThemeCell>
          </Footer>
        </ShellInner>
      </Shell>
      <Watermark>
        CSDN @<span>低代码布道师</span>
      </Watermark>
    </>
  );
}
